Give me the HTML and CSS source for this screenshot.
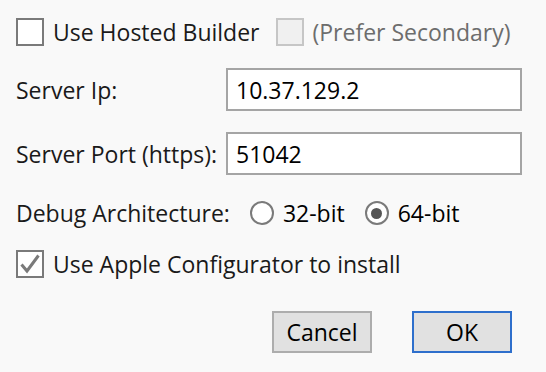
FILE: index.html
```html
<!DOCTYPE html>
<html lang="en">
  <head>
    <meta charset="UTF-8" />
    <title>Build Settings</title>
    <link rel="stylesheet" href="styles.css">
  </head>
  <body>
    <div class="dialog">
      <div class="row row-top">
        <label class="check">
          <span class="box"></span>
          <span>Use Hosted Builder</span>
        </label>
        <label class="check disabled">
          <span class="box"></span>
          <span>(Prefer Secondary)</span>
        </label>
      </div>

      <div class="row field row-ip">
        <span class="label">Server Ip:</span>
        <input class="text" type="text" value="10.37.129.2" />
      </div>

      <div class="row field row-port">
        <span class="label">Server Port (https):</span>
        <input class="text" type="text" value="51042" />
      </div>

      <div class="row row-arch">
        <span class="label arch-label">Debug Architecture:</span>
        <label class="radio"><span class="dot"></span>32-bit</label>
        <label class="radio checked"><span class="dot"></span>64-bit</label>
      </div>

      <div class="row row-apple">
        <label class="check">
          <span class="box">
            <svg width="24" height="24" viewBox="0 0 24 24">
              <path d="M3.5 12.5 L9 19 L20.5 3.5" fill="none" stroke="#7a7a7a" stroke-width="3" />
            </svg>
          </span>
          <span>Use Apple Configurator to install</span>
        </label>
      </div>

      <div class="row buttons">
        <button class="btn">Cancel</button>
        <button class="btn primary">OK</button>
      </div>
    </div>
  </body>
</html>
```

FILE: styles.css
```css
body {
  margin: 0;
  background-color: #f9f9f9;
  font-family: "Open Sans", "Noto Sans", sans-serif;
  font-size: 23px;
  color: #1a1a1a;
}

.dialog {
  display: flex;
  flex-direction: column;
  padding: 18px 24px 0 16px;
}

.row {
  display: flex;
  align-items: center;
}

.row-top {
  height: 28px;
}
.row-ip {
  margin-top: 22px;
}
.row-port {
  margin-top: 21px;
}
.row-arch {
  margin-top: 24px;
  height: 28px;
}
.row-apple {
  margin-top: 23px;
  height: 28px;
}
.buttons {
  margin-top: 33px;
  justify-content: flex-end;
  gap: 40px;
}

/* checkboxes */
.check {
  display: flex;
  align-items: center;
  gap: 9px;
}
.check .box {
  width: 24px;
  height: 24px;
  border: 2px solid #7a7a7a;
  background-color: #fff;
  display: flex;
}
.check.disabled {
  margin-left: 16px;
  color: #6d6d6d;
}
.check.disabled .box {
  border-color: #c6c6c6;
  background-color: #f0f0f0;
}

/* text fields */
.field .label {
  width: 210px;
}
.text {
  width: 296px;
  height: 43px;
  box-sizing: border-box;
  border: 2px solid #a5a5a5;
  background: #fff;
  padding: 0 8px;
  font: inherit;
  color: #000;
  outline: none;
}

/* radios */
.arch-label {
  margin-right: 20px;
}
.radio {
  display: flex;
  align-items: center;
  gap: 9px;
  margin-right: 20px;
  color: #000;
}
.radio .dot {
  width: 20px;
  height: 20px;
  border: 2px solid #7a7a7a;
  border-radius: 50%;
  background: #fff;
  display: flex;
  align-items: center;
  justify-content: center;
}
.radio.checked .dot::after {
  content: "";
  width: 11px;
  height: 11px;
  border-radius: 50%;
  background: #555;
}

/* buttons */
.btn {
  width: 100px;
  height: 42px;
  box-sizing: border-box;
  border: 2px solid #adadad;
  background-color: #e1e1e1;
  font: inherit;
  color: #000;
  padding: 0;
}
.btn.primary {
  border-color: #2e6fcc;
  margin-right: 10px;
}
```
